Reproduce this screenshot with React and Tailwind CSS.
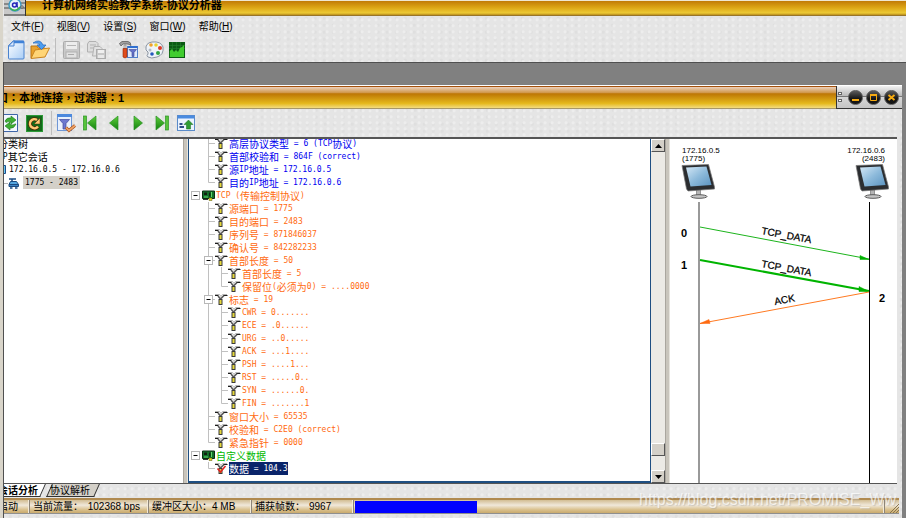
import React from "react";

const TEXTURE =
  "bg-[#e5e5e5] bg-[image:radial-gradient(circle_at_30%_30%,#ededed_1px,transparent_2px),radial-gradient(circle_at_70%_60%,#dfdfdf_1px,transparent_2px)] [background-size:7px_6px,9px_7px]";

const SANS = "font-['Liberation_Sans','Noto_Sans_CJK_SC',sans-serif]";
const CJK = /([\u3000-\u9fff\uff00-\uffef]+)/;

/* Bitmap-style text: full-width glyphs take ten pixels, half-width ones about five. */
function MonoText({ children }) {
  return (
    <span className="flex items-center whitespace-pre font-['DejaVu_Sans_Mono','Noto_Sans_CJK_SC',monospace] text-[8px] leading-[13px]">
      {children.split(CJK).map((part, i) =>
        CJK.test(part) ? (
          <span key={i} className="font-['Noto_Sans_CJK_SC',sans-serif] text-[10px]">{part}</span>
        ) : (
          <span key={i}>{part}</span>
        )
      )}
    </span>
  );
}

const MENUS = [
  ["文件", "F"],
  ["视图", "V"],
  ["设置", "S"],
  ["窗口", "W"],
  ["帮助", "H"],
];

function IconButton({ label, className, children }) {
  return (
    <button type="button" aria-label={label} className={"flex h-5 shrink-0 items-center justify-center " + className}>
      {children}
    </button>
  );
}

function Separator() {
  return <span className="h-6 w-px shrink-0 bg-[#bdbdbd]" />;
}

function LogoIcon() {
  return (
    <svg width="22" height="16" viewBox="0 0 22 16" className="shrink-0">
      <rect width="22" height="16" fill="#c9c9c9" />
      <path d="M0 4h6M0 8h6M15 3h7M16 8h6" stroke="#4a4a4a" />
      <circle cx="11" cy="5" r="6" fill="#e9f3fa" stroke="#3d9ac4" strokeWidth="1.5" />
      <path d="M6 8q5 5 10-1" stroke="#37b04a" strokeWidth="1.5" fill="none" />
      <circle cx="10.500" cy="5" r="2" fill="none" stroke="#2424b8" strokeWidth="1.5" />
      <path d="M13 2v4q0 1 1 1" fill="none" stroke="#2424b8" strokeWidth="1.5" />
      <circle cx="18" cy="7" r="1.200" fill="#fff" stroke="#555" />
      <path d="M0 15h22M21.500 0v16" stroke="#333" />
    </svg>
  );
}

function NewIcon() {
  return (
    <svg width="17" height="20" viewBox="0 0 17 20">
      <defs>
        <linearGradient id="page" x1="0" y1="0" x2="1" y2="1">
          <stop offset="0" stopColor="#ffffff" />
          <stop offset="1" stopColor="#a9cdf6" />
        </linearGradient>
      </defs>
      <path d="M5 1h10q1 0 1 1v16q0 1-1 1H1.500q-1 0-1-1V5.500z" fill="url(#page)" stroke="#4a83cf" />
      <path d="M5 2h11" stroke="#3f82d8" strokeWidth="2.500" />
      <path d="M.5 6L6 .5V6z" fill="#d6e8ff" stroke="#4a83cf" />
    </svg>
  );
}

function OpenIcon() {
  return (
    <svg width="20" height="20" viewBox="0 0 20 20">
      <path d="M1 18V6h6l1 2h7v3" fill="#e9a22d" stroke="#b97414" />
      <path d="M1 18.500L5 10l14.500-2L15 17z" fill="#ffd576" stroke="#c98420" />
      <path d="M3 3q7-5 10 2h3l-4.500 4.500L7 5h3Q8 2 3 3z" fill="#4b9df0" stroke="#2166bd" strokeWidth=".7" />
    </svg>
  );
}

function SaveIcon() {
  return (
    <svg width="19" height="20" viewBox="0 0 19 20">
      <rect x="1.500" y="1.500" width="16" height="17" rx="1" fill="#c9c9c9" stroke="#acacac" />
      <rect x="4" y="2" width="11" height="7" fill="#ededed" />
      <path d="M5 5.500h9" stroke="#b5b5b5" />
      <rect x="4" y="12" width="11" height="6" fill="#e2e2e2" stroke="#b1b1b1" />
      <path d="M6 14.500h6" stroke="#aaa" />
    </svg>
  );
}

function SaveAllIcon() {
  return (
    <svg width="20" height="20" viewBox="0 0 20 20">
      <path d="M3 1.500h7l2 2V12H1.500V4z" fill="#dedede" stroke="#b1b1b1" />
      <path d="M4 5h6M4 8h5" stroke="#b1b1b1" />
      <path d="M8 6.500h6l2 2V16H6.500z" fill="#e2e2e2" stroke="#b1b1b1" />
      <rect x="10.500" y="9.500" width="9" height="9" fill="#c8c8c8" stroke="#acacac" />
      <rect x="12" y="10" width="6" height="3" fill="#efefef" />
      <rect x="12" y="15" width="6" height="3" fill="#e8e8e8" />
    </svg>
  );
}

function HammerIcon() {
  return (
    <svg width="20" height="20" viewBox="0 0 20 20">
      <rect x="8.500" y="6.500" width="10" height="11" fill="#dfeafc" stroke="#527fc9" />
      <path d="M9 7h9.500" stroke="#2f6fd0" strokeWidth="2" />
      <path d="M10 9.500h7.500L15 12.500v4h-2v-4z" fill="#6471c8" stroke="#3b4495" strokeWidth=".6" />
      <path d="M5 5h2v4H5z" fill="#d8d8d8" stroke="#707070" strokeWidth=".5" />
      <path d="M4 8.500h4V17q-2 2-4 0z" fill="#e04c1c" stroke="#8f2708" strokeWidth=".6" />
      <path d="M.5 3.500L3 1.500h6q3 .5 3 4Q10 3.800 8 4H4L2 6z" fill="#a0a0a0" stroke="#505050" strokeWidth=".7" />
    </svg>
  );
}

function PaletteIcon() {
  return (
    <svg width="20" height="20" viewBox="0 0 20 20">
      <path d="M2 10Q1 3 8 2q9-1 11 5 1 8-6 10-6 2-9 0-2-1 0-3 1-2-2-4z" fill="#eff3f8" stroke="#808a98" strokeWidth=".9" />
      <circle cx="7" cy="5" r="1.800" fill="#f0a12b" />
      <circle cx="12" cy="5" r="1.800" fill="#ead22e" />
      <circle cx="16" cy="8" r="2" fill="#dc3b2a" />
      <circle cx="14" cy="13" r="2" fill="#30a344" />
      <circle cx="8" cy="14" r="1.800" fill="#2458bd" />
      <circle cx="6" cy="10" r="1.500" fill="#b4bcc6" />
    </svg>
  );
}

function ChartIcon() {
  return (
    <svg width="16" height="16" viewBox="0 0 16 16">
      <rect width="16" height="16" fill="#0c5a14" />
      <path d="M0 3.500h16M0 6.500h16M3.500 0v8M7.500 0v8M11.500 0v8" stroke="#23812b" strokeWidth=".6" />
      <path d="M.8 15V9L3 7l2 3 2-2 2 2 2-4 2-1 2-2v12z" fill="#41cc2f" />
    </svg>
  );
}

function RefreshIcon() {
  return (
    <svg width="14" height="18" viewBox="0 0 14 18">
      <path d="M0 .5h13.500v17H0" fill="#f3f8ff" stroke="#3f66a8" />
      <path d="M1 7q2-4 6-3V2l5 4-5 4V8Q4 7 2 8.500z" fill="#3fae33" stroke="#1d7a1a" strokeWidth=".6" />
      <path d="M12 10q-2 5-6 4v2L1 12l5-4v2.500q3 1 5-.5z" fill="#3fae33" stroke="#1d7a1a" strokeWidth=".6" />
    </svg>
  );
}

function RestartIcon() {
  return (
    <svg width="17" height="17" viewBox="0 0 17 17">
      <rect width="17" height="17" fill="#126b1a" />
      <rect x=".5" y=".5" width="16" height="16" fill="none" stroke="#2d9a38" />
      <path d="M12 11.500A4.500 4.500 0 1 1 11 5" fill="none" stroke="#4a2a05" strokeWidth="4" />
      <path d="M12 11.500A4.500 4.500 0 1 1 11 5" fill="none" stroke="#ffc873" strokeWidth="2.500" />
      <path d="M14 3v6H8z" fill="#ffc873" stroke="#4a2a05" strokeWidth=".5" />
    </svg>
  );
}

function FilterIcon() {
  return (
    <svg width="20" height="20" viewBox="0 0 20 20">
      <rect x="1.500" y="1.500" width="14" height="16" fill="#e8f0fd" stroke="#6f97d6" />
      <path d="M1 2.500h15" stroke="#4c89dd" strokeWidth="3" />
      <path d="M3.500 6.500h10L10 10.500V16H7v-5.500z" fill="#6c78cf" stroke="#3e489a" strokeWidth=".7" />
      <path d="M10 14.500l3 3 6-5" fill="none" stroke="#a34a14" strokeWidth="3" />
      <path d="M10 14.500l3 3 6-5" fill="none" stroke="#f0a366" strokeWidth="1.700" />
    </svg>
  );
}

function NavIcon({ flip, bar }) {
  return (
    <svg width="14" height="16" viewBox="0 0 14 16" className={flip ? "-scale-x-100" : ""}>
      <defs>
        <linearGradient id="leaf" x1="0" y1="0" x2="0" y2="1">
          <stop offset="0" stopColor="#5fce3c" />
          <stop offset="1" stopColor="#12810f" />
        </linearGradient>
      </defs>
      {bar && <rect x="10.500" y="1" width="3" height="14" fill="#58c43a" stroke="#2a9324" strokeWidth=".7" />}
      <path d={bar ? "M1 1l8.500 7L1 15z" : "M3 1l8.500 7L3 15z"} fill="url(#leaf)" stroke="#2a9324" strokeWidth=".7" />
    </svg>
  );
}

function PanelIcon() {
  return (
    <svg width="18" height="16" viewBox="0 0 18 16">
      <rect x=".5" y=".5" width="17" height="15" fill="#eaf3ff" stroke="#5a8bc9" />
      <path d="M1 2h16" stroke="#4a8be0" strokeWidth="3" />
      <path d="M2.500 9h3M2.500 12h4.500" stroke="#2c4d86" strokeWidth="2" />
      <path d="M11.500 5l4.500 4.500h-2.500V14h-4V9.500H7z" fill="#2e9c34" stroke="#176a1d" strokeWidth=".5" />
    </svg>
  );
}

function NodeIcon({ marked }) {
  return (
    <svg width="13" height="13" viewBox="0 0 13 13" className="shrink-0">
      <path d="M0 1.500h4.500l1.500 2 1.500-2H12" fill="none" stroke="#b4b4b4" />
      <path d="M0 2.500h3.500M8 2.500h4.500" stroke="#1e1e1e" strokeWidth="1.200" />
      <path d="M3 3l2.500 3L9 2.500" fill="none" stroke="#5a5a5a" strokeWidth="1.600" />
      <path d="M3.500 6h4v6h-4z" fill="#3a3a3a" />
      <path d="M4.500 7h2v4h-2z" fill="#e6d83a" />
      {marked && <path d="M2.500 6.500l3 3.500 5-6" fill="none" stroke="#e02020" strokeWidth="1.500" />}
    </svg>
  );
}

function BoardIcon() {
  return (
    <svg width="13" height="13" viewBox="0 0 13 13" className="shrink-0">
      <path d="M.5 2h12v7.500H.5z" fill="#12702a" stroke="#0b2c12" />
      <path d="M2 3.500h3v2.500H2zM7 3.500h1.500v4H7z" fill="#102010" />
      <path d="M9.500 3v5M2 8h4" stroke="#5fd56c" />
      <path d="M7 9h3v2.500H7z" fill="#eddc25" stroke="#5b5b10" strokeWidth=".5" />
      <path d="M1 10.500h5" stroke="#333" />
    </svg>
  );
}

function TreeCell({ kind }) {
  return (
    <svg width="13" height="13" viewBox="0 0 13 13" className="shrink-0">
      {(kind === "line" || kind === "tee" || kind === "box") && <path d="M6.500 0v13" stroke="#c0c0c0" />}
      {kind === "elbow" && <path d="M6.500 0v6.500H13" fill="none" stroke="#c0c0c0" />}
      {(kind === "tee" || kind === "box") && <path d="M6.500 6.500H13" stroke="#c0c0c0" />}
      {(kind === "box" || kind === "root") && (
        <>
          <rect x="2.500" y="2.500" width="8" height="8" fill="#fff" stroke="#b8b8b8" />
          <path d="M4.500 6.500h4" stroke="#000" />
        </>
      )}
    </svg>
  );
}

const BLUE = "text-[#0000f0]";
const ORANGE = "text-[#ff6a10]";
const GREEN = "text-[#00b800]";

const ROWS = [
  { cells: ["", "tee"], text: "高层协议类型 = 6 (TCP协议)", tone: BLUE },
  { cells: ["", "tee"], text: "首部校验和 = 864F (correct)", tone: BLUE },
  { cells: ["", "tee"], text: "源IP地址 = 172.16.0.5", tone: BLUE },
  { cells: ["", "elbow"], text: "目的IP地址 = 172.16.0.6", tone: BLUE },
  { cells: ["root"], text: "TCP (传输控制协议)", tone: ORANGE, board: true },
  { cells: ["", "tee"], text: "源端口 = 1775", tone: ORANGE },
  { cells: ["", "tee"], text: "目的端口 = 2483", tone: ORANGE },
  { cells: ["", "tee"], text: "序列号 = 871846037", tone: ORANGE },
  { cells: ["", "tee"], text: "确认号 = 842282233", tone: ORANGE },
  { cells: ["", "box"], text: "首部长度 = 50", tone: ORANGE },
  { cells: ["", "line", "tee"], text: "首部长度 = 5", tone: ORANGE },
  { cells: ["", "line", "elbow"], text: "保留位(必须为0) = ....0000", tone: ORANGE },
  { cells: ["", "box"], text: "标志 = 19", tone: ORANGE },
  { cells: ["", "line", "tee"], text: "CWR = 0.......", tone: ORANGE },
  { cells: ["", "line", "tee"], text: "ECE = .0......", tone: ORANGE },
  { cells: ["", "line", "tee"], text: "URG = ..0.....", tone: ORANGE },
  { cells: ["", "line", "tee"], text: "ACK = ...1....", tone: ORANGE },
  { cells: ["", "line", "tee"], text: "PSH = ....1...", tone: ORANGE },
  { cells: ["", "line", "tee"], text: "RST = .....0..", tone: ORANGE },
  { cells: ["", "line", "tee"], text: "SYN = ......0.", tone: ORANGE },
  { cells: ["", "line", "elbow"], text: "FIN = .......1", tone: ORANGE },
  { cells: ["", "tee"], text: "窗口大小 = 65535", tone: ORANGE },
  { cells: ["", "tee"], text: "校验和 = C2E0 (correct)", tone: ORANGE },
  { cells: ["", "elbow"], text: "紧急指针 = 0000", tone: ORANGE },
  { cells: ["root"], text: "自定义数据", tone: GREEN, board: true },
  { cells: ["", "elbow"], text: "数据 = 104.3", tone: "bg-[#0a246a] text-white", marked: true },
];

function ProtocolTree() {
  return (
    <div className="min-w-0 flex-1 overflow-hidden border-x border-b-2 border-[#1f4f82] bg-white">
      <ul className="-mt-[2px]">
        {ROWS.map((row, i) => (
          <li key={i} className="flex h-[13px] items-center">
            {row.cells.map((kind, c) => (
              <TreeCell key={c} kind={kind} />
            ))}
            {row.board ? <BoardIcon /> : <NodeIcon marked={row.marked} />}
            <span className={"ml-px " + row.tone}>
              <MonoText>{row.text}</MonoText>
            </span>
          </li>
        ))}
      </ul>
    </div>
  );
}

const BEVEL = "border border-t-white border-l-white border-r-[#555] border-b-[#555] bg-[#d4d0c8]";

function ScrollBar() {
  return (
    <div className="flex w-[14px] shrink-0 flex-col bg-[#eceae5]">
      <button type="button" aria-label="向上滚动" className={"flex h-[13px] items-center justify-center " + BEVEL}>
        <svg width="7" height="4" viewBox="0 0 7 4"><path d="M3.500 0L7 4H0z" /></svg>
      </button>
      <div className="flex-1" />
      <div className={"h-[13px] " + BEVEL} />
      <div className="h-[14px]" />
      <button type="button" aria-label="向下滚动" className={"flex h-[13px] items-center justify-center " + BEVEL}>
        <svg width="7" height="4" viewBox="0 0 7 4"><path d="M3.500 4L7 0H0z" /></svg>
      </button>
    </div>
  );
}

function Splitter() {
  return <div className="w-[5px] shrink-0 border-x border-l-[#aaa69e] border-r-[#e6e3dc] bg-[#c9c5bc]" />;
}

function Monitor({ x, y }) {
  return (
    <g transform={`translate(${x} ${y})`}>
      <path d="M14.500 25h4v8h-4z" fill="#b5b5b5" stroke="#666" strokeWidth=".6" />
      <ellipse cx="17" cy="32.500" rx="8" ry="1.800" fill="#c4c4c4" stroke="#5c5c5c" />
      <path d="M0 1.500L26.500 .5 32.500 23v2L6 27l-1.500-2z" fill="#2b2d30" stroke="#777" strokeWidth=".7" />
      <path d="M4 3.500l20.500-1L29.500 21 8.500 22.500z" fill="url(#screen)" />
    </g>
  );
}

function SequenceDiagram() {
  return (
    <svg width="227" height="345" viewBox="670 139 227 345" className="font-['Liberation_Sans',sans-serif]">
      <defs>
        <linearGradient id="screen" x1="0" y1="0" x2="1" y2="1">
          <stop offset="0" stopColor="#d5e8f6" />
          <stop offset=".5" stopColor="#8dbadb" />
          <stop offset="1" stopColor="#5a93c0" />
        </linearGradient>
      </defs>
      <text x="682" y="153" fontSize="8">172.16.0.5</text>
      <text x="682" y="161" fontSize="8">(1775)</text>
      <text x="885" y="153" fontSize="8" textAnchor="end">172.16.0.6</text>
      <text x="885" y="161" fontSize="8" textAnchor="end">(2483)</text>
      <Monitor x={682} y={164} />
      <Monitor x={856} y={164} />
      <path d="M699 202v282" stroke="#999" strokeWidth="2" />
      <path d="M869.500 202v282" stroke="#000" />
      <path d="M700 227l169 32" stroke="#1cb41c" />
      <path d="M869 259.500l-9-4v4z" fill="#00b000" stroke="#00b000" strokeWidth=".5" />
      <path d="M700 260l169 31" stroke="#00b400" strokeWidth="2" />
      <path d="M869 291.500l-10-5v5z" fill="#00b000" stroke="#00b000" strokeWidth=".5" />
      <path d="M869 292l-169 31.500" stroke="#ff7a22" />
      <path d="M700 323.500l9-4 1 4z" fill="#ff6a10" stroke="#ff6a10" strokeWidth=".5" />
      <g fontSize="10" stroke="#000" strokeWidth=".25">
        <text transform="translate(761 234) rotate(10.500)">TCP_DATA</text>
        <text transform="translate(761 267) rotate(10.500)">TCP_DATA</text>
        <text transform="translate(775 305) rotate(-10.500)">ACK</text>
      </g>
      <g fontSize="11" fontWeight="bold">
        <text x="681" y="237">0</text>
        <text x="681" y="269">1</text>
        <text x="879" y="302">2</text>
      </g>
    </svg>
  );
}

function SessionTree() {
  return (
    <div className="w-[179px] shrink-0 overflow-hidden bg-white">
      <ul className="-mt-[2px]">
        <li className="-ml-[6px] flex h-[13px] items-center"><MonoText>分类树</MonoText></li>
        <li className="-ml-[6px] flex h-[13px] items-center"><MonoText>IP其它会话</MonoText></li>
        <li className="flex h-[13px] items-center gap-[3px]">
          <svg width="2" height="9" viewBox="0 0 2 9"><path d="M0 .5h1.500v8H0" fill="#67c7f2" stroke="#1c4d8a" /></svg>
          <MonoText>172.16.0.5 - 172.16.0.6</MonoText>
        </li>
        <li className="flex h-[13px] items-center gap-1">
          <svg width="15" height="12" viewBox="0 0 15 12">
            <path d="M0 6.500h4" stroke="#b5b5b5" />
            <path d="M5 2h7M8 2v3" fill="none" stroke="#1b4a80" strokeWidth="1.500" />
            <path d="M6.500 4.500h6l2 3H5z" fill="#55a7e0" stroke="#1b4a80" />
            <path d="M5 7.500h9.500V9.500H5z" fill="#3c83c4" stroke="#1b4a80" />
            <path d="M6 11h2.500M11 11h2.500" stroke="#1b4a80" strokeWidth="1.500" />
          </svg>
          <span className="bg-[#d4d0c8] px-[2px]"><MonoText>1775 - 2483</MonoText></span>
        </li>
      </ul>
    </div>
  );
}

function WindowControls() {
  const round =
    "flex size-[15px] items-center justify-center rounded-full border border-[#555] bg-[linear-gradient(#5a5a5a,#151515_60%)]";
  return (
    <div className="flex w-[66px] shrink-0 items-center gap-[3px] border-b border-l border-[#333] bg-[linear-gradient(#f2f2f2,#b9b9b9_45%,#777_46%,#777_50%,#d6d6d6_51%,#c4c4c4)]">
      <svg width="8" height="14" viewBox="0 0 8 14">
        <rect x="1.500" y="2.500" width="3" height="2" fill="#fff" stroke="#666" />
        <rect x="1.500" y="9.500" width="3" height="2" fill="#fff" stroke="#666" />
      </svg>
      <button type="button" aria-label="最小化" className={round}>
        <svg width="9" height="9" viewBox="0 0 9 9"><path d="M1 7h7" stroke="#f5aa10" strokeWidth="2" /></svg>
      </button>
      <button type="button" aria-label="最大化" className={round}>
        <svg width="9" height="9" viewBox="0 0 9 9"><path d="M1.500 2.500h6v5h-6z" fill="none" stroke="#f5aa10" /><path d="M1 2h7" stroke="#f5aa10" strokeWidth="2" /></svg>
      </button>
      <button type="button" aria-label="关闭" className={round}>
        <svg width="9" height="9" viewBox="0 0 9 9"><path d="M1.500 2l6 5M7.500 2l-6 5" stroke="#f5aa10" strokeWidth="2" /></svg>
      </button>
    </div>
  );
}

function Tab({ active, className, children }) {
  return (
    <button
      type="button"
      role="tab"
      aria-selected={active}
      className={"relative isolate flex h-[13px] items-center overflow-hidden whitespace-nowrap text-[10px] leading-[13px] " + className}
    >
      <span
        className={
          "absolute inset-y-0 right-[3px] -z-10 -skew-x-[24deg] border-b border-r border-[#333] " +
          (active ? "-left-2 bg-white" : "left-[3px] border-l border-l-[#333] bg-[#d4d0c8]")
        }
      />
      {children}
    </button>
  );
}

function Segment({ className, children }) {
  return (
    <div className={"flex shrink-0 items-center overflow-hidden whitespace-nowrap border-r border-r-[#8c8478] shadow-[inset_-1px_0_0_#f3ead8] " + className}>
      {children}
    </div>
  );
}

function CaptureWindow() {
  return (
    <section className={"flex min-w-0 flex-1 flex-col " + TEXTURE}>
      <header className="flex h-6 shrink-0 border-t border-white">
        <div className="flex min-w-0 flex-1 items-center overflow-hidden border-t border-b border-t-[#a4510c] border-b-[#a89868] bg-[linear-gradient(#ecd0bc,#cf9648_28%,#bd7604_32%,#e5b81c_78%,#f3dc80)]">
          <h2 className="-ml-[7px] whitespace-nowrap font-['Liberation_Sans','Noto_Sans_CJK_TC',sans-serif] text-[11px] font-bold leading-4">口：本地连接，过滤器：1</h2>
        </div>
        <WindowControls />
      </header>

      <div className="flex h-7 shrink-0 items-center" role="toolbar">
        <IconButton label="刷新" className="w-[14px]"><RefreshIcon /></IconButton>
        <IconButton label="重新开始" className="mx-2 w-[17px]"><RestartIcon /></IconButton>
        <Separator />
        <div className="ml-[2px] flex">
          <IconButton label="过滤" className="w-6"><FilterIcon /></IconButton>
          <IconButton label="第一帧" className="w-6"><NavIcon flip bar /></IconButton>
          <IconButton label="上一帧" className="w-6"><NavIcon flip /></IconButton>
          <IconButton label="下一帧" className="w-6"><NavIcon /></IconButton>
          <IconButton label="最后一帧" className="w-6"><NavIcon bar /></IconButton>
          <IconButton label="面板" className="w-6"><PanelIcon /></IconButton>
        </div>
      </div>

      <div className="mr-[5px] flex min-h-0 flex-1 border-b border-t-2 border-b-[#555] border-t-[#555]">
        <SessionTree />
        <Splitter />
        <ProtocolTree />
        <ScrollBar />
        <Splitter />
        <div className="w-[227px] shrink-0 overflow-hidden bg-white"><SequenceDiagram /></div>
      </div>

      <div className="flex h-[14px] shrink-0 items-start" role="tablist">
        <Tab active className="w-[42px] justify-end pr-2 font-bold">会话分析</Tab>
        <Tab active={false} className="w-[54px] pl-1">协议解析</Tab>
      </div>

      <footer className="mr-[3px] flex h-4 shrink-0 border-b border-t-2 border-b-[#8f8f8f] border-t-[#b08a50] bg-[linear-gradient(#d2bd93,#f0e8da_40%,#d9c08c_75%,#c9aa6e)] text-[10px] leading-[13px]">
        <Segment className="w-[26px]"><span className="-ml-[6px]">启动</span></Segment>
        <Segment className="w-[119px] justify-between pl-[3px] pr-2"><span>当前流量：</span><span>102368 bps</span></Segment>
        <Segment className="w-[103px] pl-[3px]">缓冲区大小：4 MB</Segment>
        <Segment className="w-[102px] gap-1 pl-[3px]"><span>捕获帧数：</span><span>9967</span></Segment>
        <Segment className="flex-1 pl-px">
          <div role="progressbar" aria-label="捕获进度" aria-valuenow={23} className="h-3 w-[122px] bg-[#0000ff]" />
        </Segment>
        <svg width="14" height="13" viewBox="0 0 14 13" className="shrink-0">
          <path d="M5 13l9-9M8 13l6-6M11 13l3-3" stroke="#87754f" />
        </svg>
      </footer>
      <div className="h-1 shrink-0" />
    </section>
  );
}

export default function App() {
  return (
    <main className={"relative flex h-screen flex-col overflow-hidden border-l-[3px] border-[#d9d5ca] text-black " + SANS + " " + TEXTURE}>
      <header className="flex h-4 shrink-0 overflow-hidden pl-px">
        <LogoIcon />
        <div className="min-w-0 flex-1 border-b border-t border-b-[#97752a] border-t-[#efe6d0] bg-[linear-gradient(#c17a06,#dca414_45%,#ecc935_85%,#b98c1c)] pl-4">
          <h1 className="whitespace-nowrap text-[11px] font-bold leading-[8px]">计算机网络实验教学系统-协议分析器</h1>
        </div>
      </header>

      <nav className="flex h-[21px] shrink-0 items-center gap-[13px] pl-2 text-[10px] leading-4">
        {MENUS.map(([name, key]) => (
          <button key={key} type="button" className="whitespace-nowrap">
            {name}(<span className="underline">{key}</span>)
          </button>
        ))}
      </nav>

      <div className="flex h-[25px] shrink-0 items-center gap-[5px] pl-[5px]" role="toolbar">
        <IconButton label="新建" className="w-[17px]"><NewIcon /></IconButton>
        <IconButton label="打开" className="w-5"><OpenIcon /></IconButton>
        <Separator />
        <IconButton label="保存" className="w-5"><SaveIcon /></IconButton>
        <IconButton label="全部保存" className="w-5"><SaveAllIcon /></IconButton>
        <IconButton label="过滤设置" className="ml-2 w-5"><HammerIcon /></IconButton>
        <IconButton label="颜色" className="w-5"><PaletteIcon /></IconButton>
        <IconButton label="流量图" className="w-4"><ChartIcon /></IconButton>
      </div>

      <div className="flex min-h-0 flex-1 border-l border-t border-[#505050] bg-[#808080] pr-1 pt-[22px]">
        <CaptureWindow />
      </div>

      <p className="pointer-events-none absolute bottom-2 right-[10px] whitespace-nowrap text-[16px] leading-5 text-white/70 [text-shadow:1px_1px_1px_#9996]">
        https://blog.csdn.net/PROMISE_Ww
      </p>
    </main>
  );
}
